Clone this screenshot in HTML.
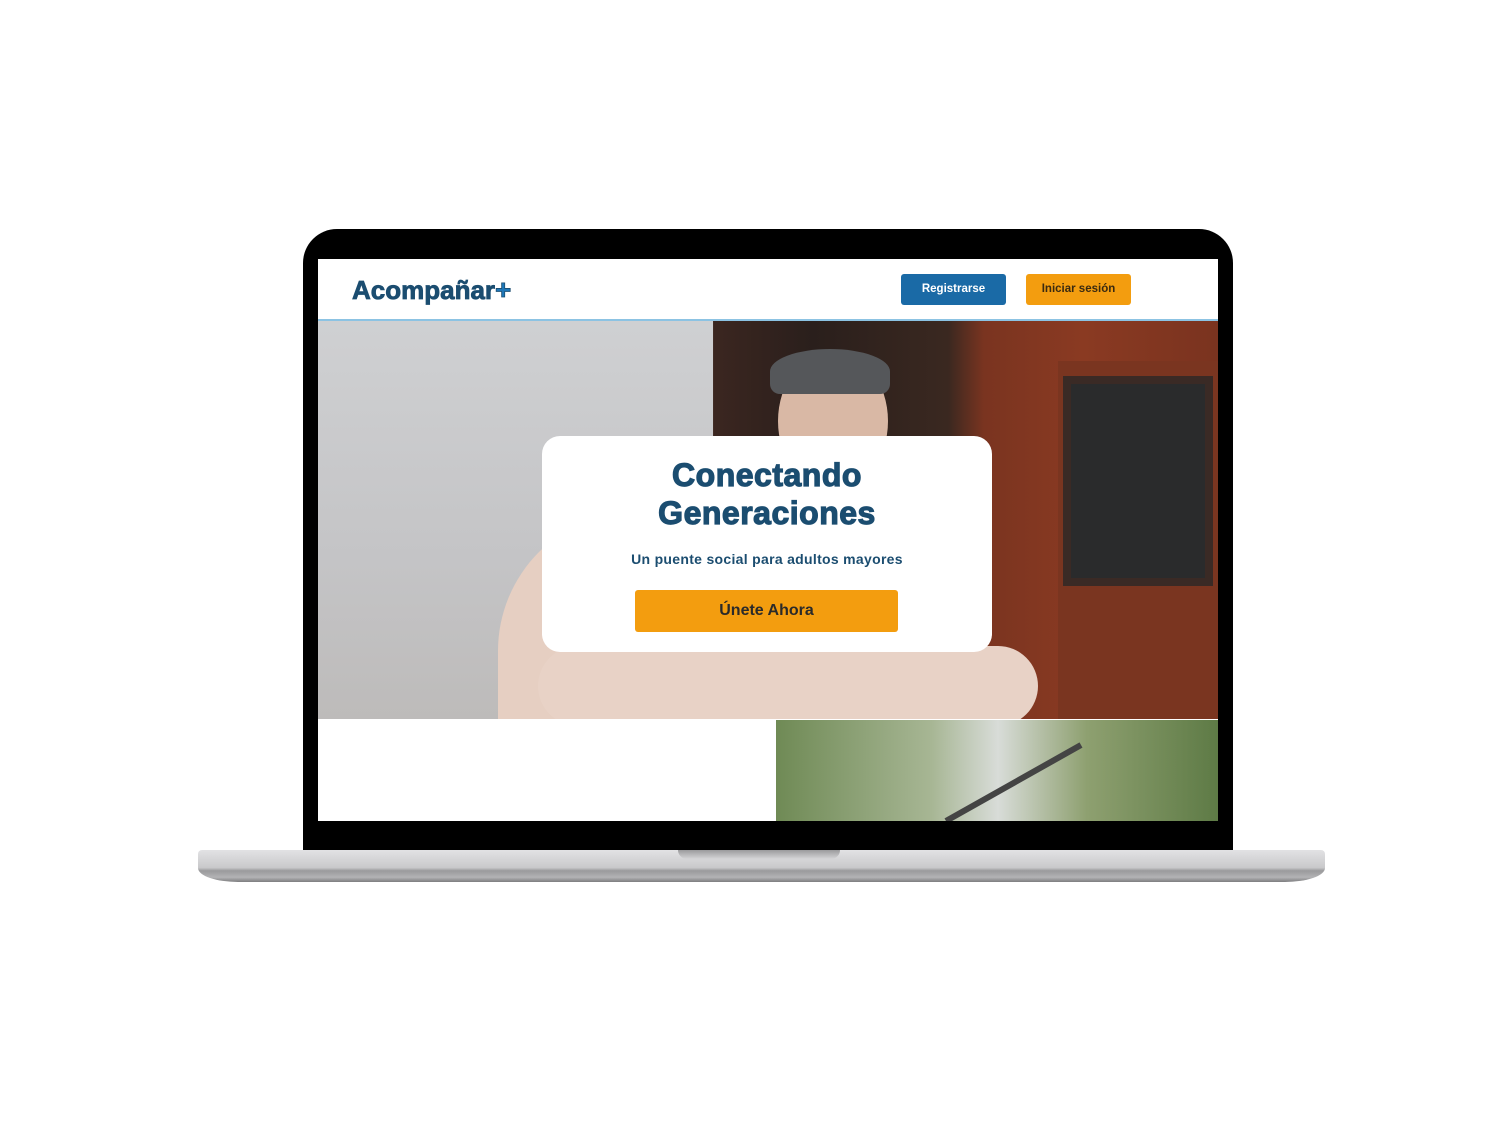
<!DOCTYPE html>
<html><head><meta charset="utf-8"><style>
*{margin:0;padding:0;box-sizing:border-box}
body{width:1500px;height:1125px;background:#fff;position:relative;overflow:hidden;font-family:"Liberation Sans",sans-serif}
.bezel{position:absolute;left:303px;top:229px;width:930px;height:625px;background:#000;border-radius:34px 34px 0 0}
.screen{position:absolute;left:318px;top:259px;width:900px;height:562px;background:#fff;overflow:hidden}
.nav{position:absolute;left:0;top:0;width:900px;height:62px;background:#fff;border-bottom:2px solid #8cc3e3}
.logo{position:absolute;left:34px;top:15px;font-size:26px;font-weight:900;color:#1b4d70;-webkit-text-stroke:0.8px #1b4d70}
.logo span{color:#1f77b8;font-size:28px}
.btn{position:absolute;top:15px;width:105px;height:31px;border-radius:3px;font-size:11.5px;font-weight:700;text-align:center;line-height:31px}
.hero{position:absolute;left:0;top:62px;width:900px;height:398px;overflow:hidden;
background:linear-gradient(90deg,#c9c9cb 0%,#d4d3d3 20%,#bfb9b2 35%,#b8aca0 43%,#3b2620 44%,#2a1f1c 55%,#3a2820 70%,#7a3420 74%,#8a3a22 85%,#7a331f 100%)}
.wall{position:absolute;left:0;top:0;width:395px;height:398px;background:linear-gradient(180deg,#cfd0d2,#c4c4c6 60%,#bdbbba)}
.door{position:absolute;left:740px;top:40px;width:160px;height:358px;background:#7a3520}
.win{position:absolute;left:745px;top:55px;width:150px;height:210px;background:#2a2b2c;border:8px solid #3a2a25}
.coat{position:absolute;left:180px;top:190px;width:300px;height:220px;background:#e6cfc2;border-radius:140px 60px 0 0}
.arm{position:absolute;left:220px;top:325px;width:500px;height:80px;background:#e8d2c6;border-radius:40px}
.man{position:absolute;left:460px;top:30px;width:110px;height:140px;background:#d9b8a5;border-radius:50%}
.cap{position:absolute;left:452px;top:28px;width:120px;height:45px;background:#55575a;border-radius:50% 50% 10px 10px}
.card{position:absolute;left:542px;top:436px;width:450px;height:216px;background:#fff;border-radius:18px;text-align:center;color:#1b4d70}
.card h1{font-size:32px;font-weight:900;line-height:38px;margin-top:20px;-webkit-text-stroke:1.2px #1b4d70;letter-spacing:0.5px}
.card p{font-size:14px;font-weight:700;margin-top:19px;letter-spacing:0.3px}
.cta{position:absolute;left:93px;top:154px;width:263px;height:42px;background:#f39d0f;border-radius:3px;color:#2a2a2a;font-size:16px;font-weight:700;line-height:42px}
.photo2{position:absolute;left:458px;top:461px;width:444px;height:101px;background:linear-gradient(90deg,#6f8a55,#a7b694 35%,#d8dcd8 50%,#8ea070 70%,#5d7a45)}
.base{position:absolute;left:198px;top:850px;width:1127px;height:32px;border-radius:4px 4px 40px 40px/4px 4px 14px 14px;background:linear-gradient(180deg,#e2e2e4 0%,#c9c9cb 55%,#9a9a9c 65%,#b3b3b5 85%,#7d7d7f 100%)}
.notch{position:absolute;left:678px;top:850px;width:162px;height:9px;background:linear-gradient(180deg,#9a9a9c,#d5d5d7);border-radius:0 0 10px 10px}
</style></head><body>
<div class="bezel"></div>
<div class="screen">
 <div class="nav">
  <div class="logo">Acompañar<span>+</span></div>
  <div class="btn" style="left:583px;background:#1a6aa6;color:#fff">Registrarse</div>
  <div class="btn" style="left:708px;background:#f39d0f;color:#3a2a10">Iniciar sesión</div>
 </div>
 <div class="hero">
  <div class="wall"></div>
  <div class="door"></div>
  <div class="win"></div>
  <div class="man"></div>
  <div class="cap"></div>
  <div class="coat"></div>
  <div class="arm"></div>
 </div>
 <div class="photo2"><svg width="444" height="101"><line x1="170" y1="101" x2="305" y2="25" stroke="#444" stroke-width="6"/></svg></div>
</div>
<div class="card">
 <h1>Conectando<br>Generaciones</h1>
 <p>Un puente social para adultos mayores</p>
 <div class="cta">Únete Ahora</div>
</div>
<div class="base"></div>
<div class="notch"></div>
</body></html>
